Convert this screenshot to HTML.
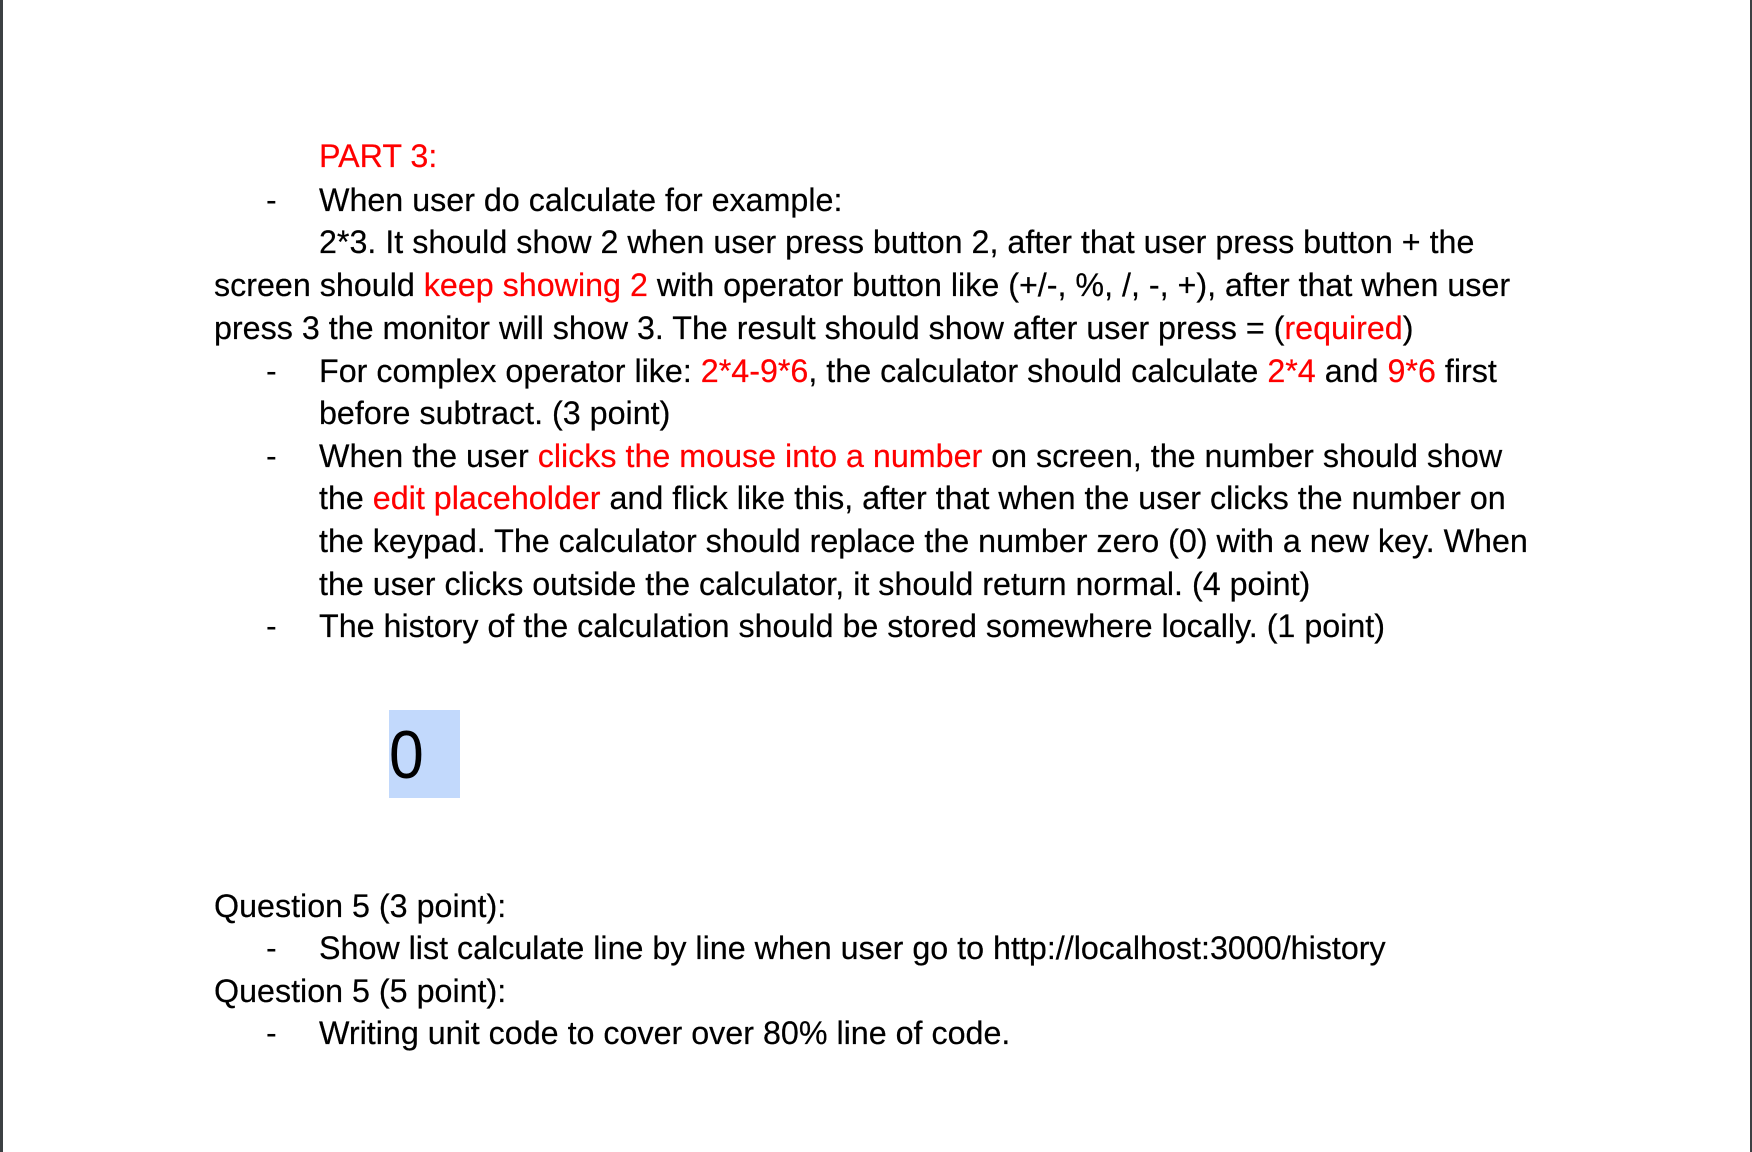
<!DOCTYPE html>
<html><head><meta charset="utf-8"><style>
html,body{margin:0;padding:0}
body{width:1752px;height:1152px;background:#fff;position:relative;overflow:hidden;font-family:"Liberation Sans",Arial,sans-serif;font-size:32.25px;color:#000}
.bl{position:absolute;left:0;top:0;width:3px;height:1152px;background:#3c4043}
.br{position:absolute;right:0;top:0;width:2px;height:1152px;background:#3c4043}
.l{position:absolute;white-space:nowrap;line-height:44px;height:44px;-webkit-text-stroke:0.2px #000}
.r{color:#ff0000;-webkit-text-stroke:0.2px #ff0000}
.d{position:absolute;left:266px;line-height:44px}
.box{position:absolute;left:389px;top:710px;width:71px;height:88px;background:#c2d9fc}
.box span{position:absolute;left:0;top:5px;font-size:68px;line-height:80px;display:inline-block;transform:scaleX(0.92);transform-origin:left}
</style></head><body>
<div class="bl"></div><div class="br"></div>
<div class="l r" style="left:319px;top:134px">PART 3:</div>
<div class="d" style="top:178px">-</div>
<div class="l" style="left:319px;top:178px">When user do calculate for example:</div>
<div class="l" style="left:319px;top:220px">2*3. It should show 2 when user press button 2, after that user press button + the</div>
<div class="l" style="left:214px;top:263px">screen should <span class="r">keep showing 2</span> with operator button like (+/-, %, /, -, +), after that when user</div>
<div class="l" style="left:214px;top:306px">press 3 the monitor will show 3. The result should show after user press = (<span class="r">required</span>)</div>
<div class="d" style="top:349px">-</div>
<div class="l" style="left:319px;top:349px">For complex operator like: <span class="r">2*4-9*6</span>, the calculator should calculate <span class="r">2*4</span> and <span class="r">9*6</span> first</div>
<div class="l" style="left:319px;top:391px">before subtract. (3 point)</div>
<div class="d" style="top:434px">-</div>
<div class="l" style="left:319px;top:434px">When the user <span class="r">clicks the mouse into a number</span> on screen, the number should show</div>
<div class="l" style="left:319px;top:476px">the <span class="r">edit placeholder</span> and flick like this, after that when the user clicks the number on</div>
<div class="l" style="left:319px;top:519px">the keypad. The calculator should replace the number zero (0) with a new key. When</div>
<div class="l" style="left:319px;top:562px">the user clicks outside the calculator, it should return normal. (4 point)</div>
<div class="d" style="top:604px">-</div>
<div class="l" style="left:319px;top:604px">The history of the calculation should be stored somewhere locally. (1 point)</div>
<div class="box"><span>0</span></div>
<div class="l" style="left:214px;top:884px">Question 5 (3 point):</div>
<div class="d" style="top:926px">-</div>
<div class="l" style="left:319px;top:926px">Show list calculate line by line when user go to http://localhost:3000/history</div>
<div class="l" style="left:214px;top:969px">Question 5 (5 point):</div>
<div class="d" style="top:1011px">-</div>
<div class="l" style="left:319px;top:1011px">Writing unit code to cover over 80% line of code.</div>
</body></html>
